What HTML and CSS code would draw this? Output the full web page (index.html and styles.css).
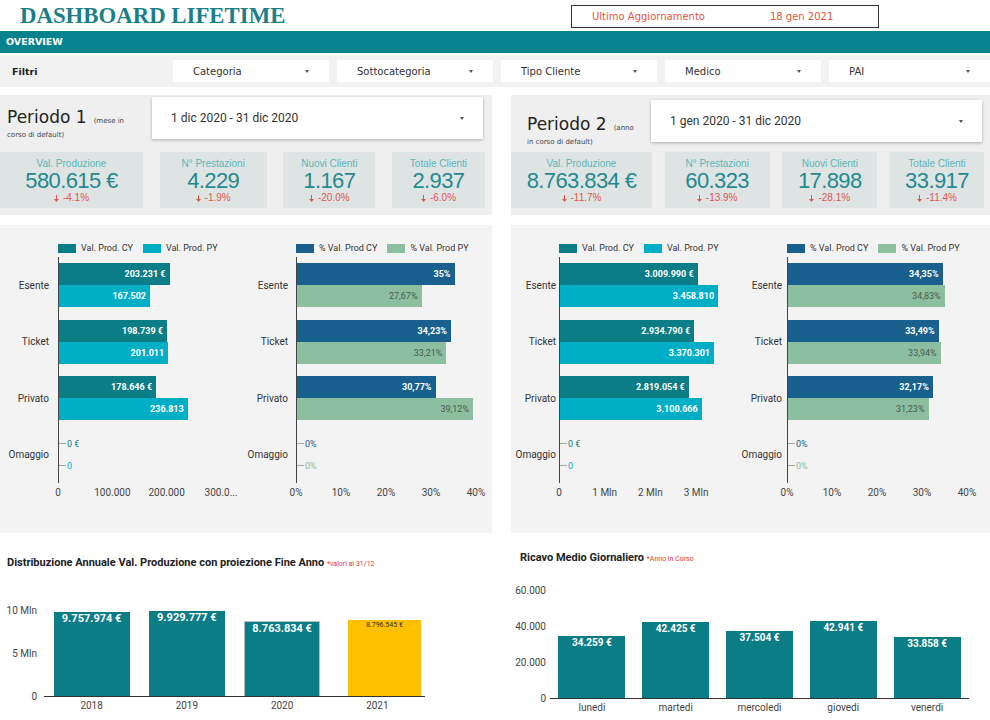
FILE: index.html
```html
<!DOCTYPE html>
<html>
<head>
    <title>Dashboard Lifetime</title>
    <link rel="stylesheet" href="styles.css">
</head>
<body>
    <header class="top">
        <h1 class="brand">DASHBOARD LIFETIME</h1>
        <div class="updated"><span>Ultimo Aggiornamento</span><span>18 gen 2021</span></div>
    </header>

    <div class="banner">OVERVIEW</div>

    <div class="filters">
        <span class="filters-label">Filtri</span>
        <div class="select"><span>Categoria</span><i class="caret"></i></div>
        <div class="select"><span>Sottocategoria</span><i class="caret"></i></div>
        <div class="select"><span>Tipo Cliente</span><i class="caret"></i></div>
        <div class="select"><span>Medico</span><i class="caret"></i></div>
        <div class="select"><span>PAI</span><i class="caret"></i></div>
    </div>

    <div class="periods">
        <section class="period p1">
            <div class="period-head">
                <div class="period-title">
                    <div class="title-line"><span class="big">Periodo 1</span><span class="small">(mese in</span></div>
                    <div class="small">corso di default)</div>
                </div>
                <div class="date-select"><span>1 dic 2020 - 31 dic 2020</span><i class="caret"></i></div>
            </div>
            <div class="kpis">
                <div class="kpi k1">
                    <div class="kpi-label">Val. Produzione</div>
                    <div class="kpi-value">580.615 €</div>
                    <div class="kpi-delta"><svg width="5" height="7" viewBox="0 0 5 7"><path d="M2 0h1v4h2L2.5 7 0 4h2z"/></svg>-4.1%</div>
                </div>
                <div class="kpi k2">
                    <div class="kpi-label">N° Prestazioni</div>
                    <div class="kpi-value">4.229</div>
                    <div class="kpi-delta"><svg width="5" height="7" viewBox="0 0 5 7"><path d="M2 0h1v4h2L2.5 7 0 4h2z"/></svg>-1.9%</div>
                </div>
                <div class="kpi k3">
                    <div class="kpi-label">Nuovi Clienti</div>
                    <div class="kpi-value">1.167</div>
                    <div class="kpi-delta"><svg width="5" height="7" viewBox="0 0 5 7"><path d="M2 0h1v4h2L2.5 7 0 4h2z"/></svg>-20.0%</div>
                </div>
                <div class="kpi k4">
                    <div class="kpi-label">Totale Clienti</div>
                    <div class="kpi-value">2.937</div>
                    <div class="kpi-delta"><svg width="5" height="7" viewBox="0 0 5 7"><path d="M2 0h1v4h2L2.5 7 0 4h2z"/></svg>-6.0%</div>
                </div>
            </div>
        </section>

        <section class="period p2">
            <div class="period-head">
                <div class="period-title">
                    <div class="title-line"><span class="big">Periodo 2</span><span class="small">(anno</span></div>
                    <div class="small">in corso di default)</div>
                </div>
                <div class="date-select"><span>1 gen 2020 - 31 dic 2020</span><i class="caret"></i></div>
            </div>
            <div class="kpis">
                <div class="kpi k1">
                    <div class="kpi-label">Val. Produzione</div>
                    <div class="kpi-value">8.763.834 €</div>
                    <div class="kpi-delta"><svg width="5" height="7" viewBox="0 0 5 7"><path d="M2 0h1v4h2L2.5 7 0 4h2z"/></svg>-11.7%</div>
                </div>
                <div class="kpi k2">
                    <div class="kpi-label">N° Prestazioni</div>
                    <div class="kpi-value">60.323</div>
                    <div class="kpi-delta"><svg width="5" height="7" viewBox="0 0 5 7"><path d="M2 0h1v4h2L2.5 7 0 4h2z"/></svg>-13.9%</div>
                </div>
                <div class="kpi k3">
                    <div class="kpi-label">Nuovi Clienti</div>
                    <div class="kpi-value">17.898</div>
                    <div class="kpi-delta"><svg width="5" height="7" viewBox="0 0 5 7"><path d="M2 0h1v4h2L2.5 7 0 4h2z"/></svg>-28.1%</div>
                </div>
                <div class="kpi k4">
                    <div class="kpi-label">Totale Clienti</div>
                    <div class="kpi-value">33.917</div>
                    <div class="kpi-delta"><svg width="5" height="7" viewBox="0 0 5 7"><path d="M2 0h1v4h2L2.5 7 0 4h2z"/></svg>-11.4%</div>
                </div>
            </div>
        </section>
    </div>

    <div class="panels">
        <section class="panel panel-left">
            <!-- valore produzione per categoria, periodo 1 -->
            <div class="hchart c1">
                <div class="legend">
                    <span class="key"><i class="sw cy"></i>Val. Prod. CY</span>
                    <span class="key"><i class="sw py"></i>Val. Prod. PY</span>
                </div>
                <div class="cats"><span>Esente</span><span>Ticket</span><span>Privato</span><span>Omaggio</span></div>
                <div class="plot">
                    <div class="band"><div class="bar cy" style="width:110.5px">203.231 €</div><div class="bar py" style="width:91px">167.502</div></div>
                    <div class="band"><div class="bar cy" style="width:108px">198.739 €</div><div class="bar py" style="width:109.2px">201.011</div></div>
                    <div class="band"><div class="bar cy" style="width:97.1px">178.646 €</div><div class="bar py" style="width:128.7px">236.813</div></div>
                    <div class="band"><div class="zero t-cy">0 €</div><div class="zero t-py">0</div></div>
                </div>
                <div class="ticks"><span>0</span><span>100.000</span><span>200.000</span><span>300.0...</span></div>
            </div>

            <div class="hchart c2">
                <div class="legend">
                    <span class="key"><i class="sw pcy"></i>% Val. Prod CY</span>
                    <span class="key"><i class="sw ppy"></i>% Val. Prod PY</span>
                </div>
                <div class="cats"><span>Esente</span><span>Ticket</span><span>Privato</span><span>Omaggio</span></div>
                <div class="plot">
                    <div class="band"><div class="bar pcy" style="width:157.5px">35%</div><div class="bar ppy" style="width:124.5px">27,67%</div></div>
                    <div class="band"><div class="bar pcy" style="width:154px">34,23%</div><div class="bar ppy" style="width:149.4px">33,21%</div></div>
                    <div class="band"><div class="bar pcy" style="width:138.5px">30,77%</div><div class="bar ppy" style="width:176px">39,12%</div></div>
                    <div class="band"><div class="zero t-pcy">0%</div><div class="zero t-ppy">0%</div></div>
                </div>
                <div class="ticks"><span>0%</span><span>10%</span><span>20%</span><span>30%</span><span>40%</span></div>
            </div>
        </section>

        <section class="panel panel-right">
            <!-- valore produzione per categoria, periodo 2 -->
            <div class="hchart c3">
                <div class="legend">
                    <span class="key"><i class="sw cy"></i>Val. Prod. CY</span>
                    <span class="key"><i class="sw py"></i>Val. Prod. PY</span>
                </div>
                <div class="cats"><span>Esente</span><span>Ticket</span><span>Privato</span><span>Omaggio</span></div>
                <div class="plot">
                    <div class="band"><div class="bar cy" style="width:137.6px">3.009.990 €</div><div class="bar py" style="width:158.1px">3.458.810</div></div>
                    <div class="band"><div class="bar cy" style="width:134.1px">2.934.790 €</div><div class="bar py" style="width:154px">3.370.301</div></div>
                    <div class="band"><div class="bar cy" style="width:128.8px">2.819.054 €</div><div class="bar py" style="width:141.7px">3.100.666</div></div>
                    <div class="band"><div class="zero t-cy">0 €</div><div class="zero t-py">0</div></div>
                </div>
                <div class="ticks"><span>0</span><span>1 Mln</span><span>2 Mln</span><span>3 Mln</span></div>
            </div>

            <div class="hchart c4">
                <div class="legend">
                    <span class="key"><i class="sw pcy"></i>% Val. Prod CY</span>
                    <span class="key"><i class="sw ppy"></i>% Val. Prod PY</span>
                </div>
                <div class="cats"><span>Esente</span><span>Ticket</span><span>Privato</span><span>Omaggio</span></div>
                <div class="plot">
                    <div class="band"><div class="bar pcy" style="width:154.6px">34,35%</div><div class="bar ppy" style="width:156.7px">34,83%</div></div>
                    <div class="band"><div class="bar pcy" style="width:150.7px">33,49%</div><div class="bar ppy" style="width:152.7px">33,94%</div></div>
                    <div class="band"><div class="bar pcy" style="width:144.8px">32,17%</div><div class="bar ppy" style="width:140.5px">31,23%</div></div>
                    <div class="band"><div class="zero t-pcy">0%</div><div class="zero t-ppy">0%</div></div>
                </div>
                <div class="ticks"><span>0%</span><span>10%</span><span>20%</span><span>30%</span><span>40%</span></div>
            </div>
        </section>
    </div>

    <div class="bottom">
        <section class="vsec vs-year">
            <h3 class="vtitle">Distribuzione Annuale Val. Produzione con proiezione Fine Anno <span class="note">*valori al 31/12</span></h3>
            <div class="vchart">
                <div class="yaxis"><span>10 Mln</span><span>5 Mln</span><span>0</span></div>
                <div class="vplot">
                    <div class="vbar" style="height:84.4px">9.757.974 €</div>
                    <div class="vbar" style="height:85.9px">9.929.777 €</div>
                    <div class="vbar outlined" style="height:75.8px">8.763.834 €</div>
                    <div class="vbar forecast" style="height:76.1px">8.796.545 €</div>
                </div>
                <div class="xaxis"><span>2018</span><span>2019</span><span>2020</span><span>2021</span></div>
            </div>
        </section>

        <section class="vsec vs-day">
            <h3 class="vtitle">Ricavo Medio Giornaliero <span class="note">*Anno in Corso</span></h3>
            <div class="vchart">
                <div class="yaxis"><span>60.000</span><span>40.000</span><span>20.000</span><span>0</span></div>
                <div class="vplot">
                    <div class="vbar" style="height:61.7px">34.259 €</div>
                    <div class="vbar" style="height:76.4px">42.425 €</div>
                    <div class="vbar" style="height:67.5px">37.504 €</div>
                    <div class="vbar" style="height:77.3px">42.941 €</div>
                    <div class="vbar" style="height:60.9px">33.858 €</div>
                </div>
                <div class="xaxis"><span>lunedi</span><span>martedi</span><span>mercoledi</span><span>giovedi</span><span>venerdi</span></div>
            </div>
        </section>
    </div>
</body>
</html>
```

FILE: styles.css
```css
* {
    box-sizing: border-box;
}

body {
    margin: 0;
    width: 990px;
    font-family: Roboto, "Liberation Sans", sans-serif;
    color: #222;
    background-color: #fff;
}

/* header */

.top {
    display: flex;
    align-items: center;
    height: 31px;
}

.brand {
    margin: 0 0 0 20px;
    font: bold 22.8px/31px "Liberation Serif", serif;
    color: #1a7f86;
}

.updated {
    display: flex;
    align-items: center;
    gap: 65px;
    width: 308px;
    height: 23px;
    margin: 2px 111px 0 auto;
    padding-left: 20px;
    border: 1px solid #333;
    font: 10px "DejaVu Sans", sans-serif;
    color: #e8553d;
}

.banner {
    height: 22px;
    padding-left: 6px;
    background-color: #07838f;
    color: #fff;
    font: bold 9.5px/22px "DejaVu Sans", sans-serif;
}

/* filters */

.filters {
    display: grid;
    grid-template-columns: 165px 156px 156px 156px 156px 1fr;
    column-gap: 8px;
    align-items: center;
    height: 32px;
    margin-top: 2px;
    background-color: #f2f2f2;
    font: 10px "DejaVu Sans", sans-serif;
    color: #333;
}

.filters-label {
    padding-left: 12px;
    font-weight: bold;
    font-size: 9.5px;
    color: #222;
}

.select {
    display: flex;
    align-items: center;
    justify-content: space-between;
    height: 22px;
    padding: 0 20px;
    background-color: #fff;
}

.caret {
    width: 0;
    height: 0;
    border-top: 3px solid #555;
    border-left: 2.5px solid transparent;
    border-right: 2.5px solid transparent;
}

/* periods */

.periods {
    display: grid;
    grid-template-columns: 492px 479px;
    column-gap: 19px;
    margin-top: 8px;
}

.period {
    display: flex;
    flex-direction: column;
    height: 120px;
    background-color: #efefef;
}

.period-head {
    display: flex;
    align-items: flex-start;
    height: 57px;
}

.p1 .period-head {
    padding-top: 2px;
}

.p2 .period-head {
    padding-top: 5px;
}

.period-title {
    font: 7px/12px "DejaVu Sans", sans-serif;
    color: #444;
}

.p1 .period-title {
    width: 152px;
    margin-top: 8px;
    padding-left: 7px;
}

.p2 .period-title {
    width: 140px;
    margin-top: 12px;
    padding-left: 16px;
}

.title-line {
    display: flex;
    align-items: baseline;
    gap: 7px;
    height: 24px;
}

.title-line .big {
    font-size: 17px;
    line-height: 24px;
    color: #222;
}

.date-select {
    display: flex;
    align-items: center;
    justify-content: space-between;
    flex: 0 0 331px;
    height: 42px;
    padding: 0 19px;
    background-color: #fff;
    box-shadow: 0 1px 3px rgba(0, 0, 0, 0.28);
    font-size: 12px;
    color: #333;
}

.kpis {
    display: flex;
    justify-content: space-between;
    height: 56px;
}

.p1 .kpis {
    padding-right: 7px;
}

.p2 .kpis {
    padding-right: 6px;
}

.kpi {
    padding-top: 6px;
    background-color: #dee4e4;
    text-align: center;
    font-family: "Liberation Sans", Arial, sans-serif;
}

.p1 .k1 { width: 143px; }
.p1 .k2 { width: 107px; }
.p1 .k3 { width: 92px; }
.p1 .k4 { width: 93px; }
.p2 .k1 { width: 141px; }
.p2 .k2 { width: 105px; }
.p2 .k3 { width: 95px; }
.p2 .k4 { width: 94px; }

.kpi-label {
    font-size: 10px;
    line-height: 12px;
    color: #5db4b9;
}

.kpi-value {
    font-size: 22px;
    line-height: 22px;
    letter-spacing: -0.6px;
    color: #1f8a8f;
}

.kpi-delta {
    display: flex;
    align-items: center;
    justify-content: center;
    gap: 4px;
    font-size: 10px;
    line-height: 12px;
    color: #e0574e;
}

.kpi-delta svg {
    fill: #e0574e;
}

/* horizontal bar charts */

.panels {
    display: grid;
    grid-template-columns: 492px 479px;
    column-gap: 19px;
    margin-top: 10px;
}

.panel {
    display: grid;
    height: 308px;
    background-color: #f3f3f3;
}

.panel-left {
    grid-template-columns: 245px 1fr;
}

.panel-right {
    grid-template-columns: 229px 1fr;
}

.hchart {
    display: grid;
    grid-template-columns: var(--lab) 1fr;
    grid-template-rows: 9px 226px 12px;
    row-gap: 4px;
    align-content: start;
    padding-top: 19px;
}

.c1 { --lab: 58px; --gap: 9px; --step: 54.35px; }
.c2 { --lab: 51px; --gap: 8px; --step: 45px; }
.c3 { --lab: 48px; --gap: 3px; --step: 45.7px; }
.c4 { --lab: 47px; --gap: 5px; --step: 45px; }

.legend {
    grid-column: 2;
    grid-row: 1;
    display: flex;
    gap: 10px;
    font-size: 9px;
    line-height: 9px;
    color: #333;
}

.key {
    display: flex;
    align-items: center;
    gap: 5px;
}

.sw {
    width: 18px;
    height: 9px;
}

.cats {
    grid-column: 1;
    grid-row: 2;
    display: grid;
    grid-template-rows: repeat(4, 1fr);
    align-items: center;
    justify-items: end;
    padding-right: var(--gap);
    font-size: 10px;
    color: #333;
}

.plot {
    grid-column: 2;
    grid-row: 2;
    display: grid;
    grid-template-rows: repeat(4, 1fr);
    border-left: 1px solid #444;
}

.band {
    display: flex;
    flex-direction: column;
    justify-content: center;
}

.bar {
    display: flex;
    align-items: center;
    justify-content: flex-end;
    height: 22px;
    padding-right: 4px;
    font-size: 9px;
    font-weight: bold;
    color: #fff;
    white-space: nowrap;
}

.cy { background-color: #0a7d87; }
.py { background-color: #00afc6; }
.pcy { background-color: #19608f; }
.ppy { background-color: #8cbf9f; }

.bar.ppy {
    font-weight: normal;
    color: #4a5a52;
}

.zero {
    display: flex;
    align-items: center;
    gap: 1px;
    height: 22px;
    font-size: 9px;
}

.zero::before {
    content: "";
    width: 7px;
    height: 1px;
    background-color: #9aa;
}

.t-cy { color: #0a7d87; }
.t-py { color: #00afc6; }
.t-pcy { color: #19608f; }
.t-ppy { color: #8cbf9f; }

.ticks {
    grid-column: 2;
    grid-row: 3;
    display: grid;
    grid-auto-flow: column;
    grid-auto-columns: var(--step);
    justify-content: start;
    margin-left: calc(var(--step) / -2);
    font-size: 10px;
    line-height: 12px;
    color: #444;
    text-align: center;
    white-space: nowrap;
}

/* vertical bar charts */

.bottom {
    display: grid;
    grid-template-columns: 495px 495px;
}

.vtitle {
    margin: 0;
    font-size: 11px;
    font-weight: bold;
    line-height: 14px;
    color: #222;
}

.note {
    font-size: 7px;
    font-weight: normal;
    color: #e53935;
}

.vs-year {
    padding-top: 23px;
    --ylab: 44px; --plotw: 381px; --ploth: 86.5px; --barw: 76px; --ypad: 7px; --cols: 4;
}

.vs-year .vtitle {
    padding-left: 7px;
}

.vs-year .vchart {
    margin-top: 39.5px;
}

.vs-day {
    padding-top: 18px;
    --ylab: 55px; --plotw: 419px; --ploth: 108px; --barw: 67px; --ypad: 4px; --cols: 5;
}

.vs-day .vtitle {
    padding-left: 25px;
}

.vs-day .vchart {
    margin-top: 25px;
}

.vchart {
    display: grid;
    grid-template-columns: var(--ylab) var(--plotw);
    grid-template-rows: var(--ploth) auto;
}

.yaxis {
    grid-column: 1;
    grid-row: 1;
    display: flex;
    flex-direction: column;
    justify-content: space-between;
    margin: -6px 0;
    padding-right: var(--ypad);
    font-size: 10px;
    line-height: 12px;
    color: #444;
    text-align: right;
}

.vplot {
    grid-column: 2;
    grid-row: 1;
    display: grid;
    grid-template-columns: repeat(var(--cols), 1fr);
    align-items: end;
    justify-items: center;
    border-bottom: 1px solid #333;
}

.vbar {
    width: var(--barw);
    padding-top: 1px;
    background-color: #0a7d87;
    color: #fff;
    font-size: 10px;
    font-weight: bold;
    line-height: 12px;
    text-align: center;
}

.vs-year .vbar {
    font-size: 11px;
}

.vs-year .vbar.outlined {
    border: 1px solid #b4c0c2;
    border-bottom: none;
}

.vs-year .vbar.forecast {
    width: 73px;
    margin-left: 14px;
    background-color: #ffc000;
    color: #333;
    font-size: 7px;
    font-weight: normal;
    line-height: 8px;
}

.xaxis {
    grid-column: 2;
    grid-row: 2;
    display: grid;
    grid-template-columns: repeat(var(--cols), 1fr);
    margin-top: 3px;
    font-size: 10px;
    line-height: 12px;
    color: #444;
    text-align: center;
}
```
